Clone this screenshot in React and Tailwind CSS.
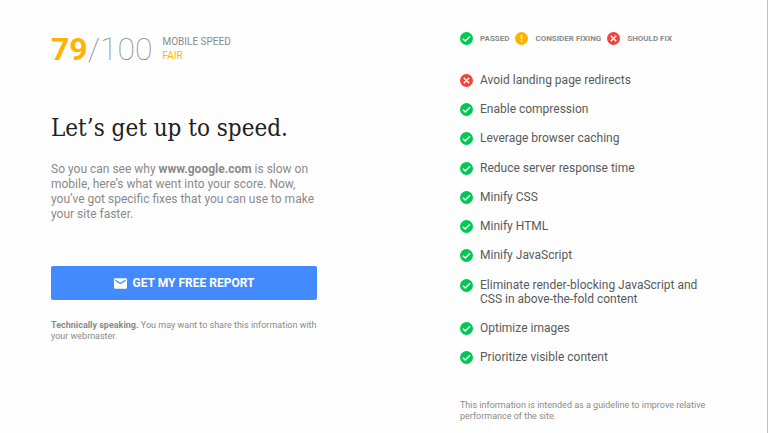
const CHECKS = [
  ["fail", "Avoid landing page redirects"],
  ["pass", "Enable compression"],
  ["pass", "Leverage browser caching"],
  ["pass", "Reduce server response time"],
  ["pass", "Minify CSS"],
  ["pass", "Minify HTML"],
  ["pass", "Minify JavaScript"],
  ["pass", "Eliminate render-blocking JavaScript and CSS in above-the-fold content"],
  ["pass", "Optimize images"],
  ["pass", "Prioritize visible content"],
];

function StatusIcon({ kind }) {
  return (
    <svg viewBox="0 0 20 20" className="size-[13px] shrink-0" aria-hidden="true">
      {kind === "pass" && (
        <>
          <circle cx="10" cy="10" r="10" fill="#00c853" />
          <path d="M4.4 10.4l3.7 3.6 7.4-7.4" fill="none" stroke="#fff" strokeWidth="2.2" />
        </>
      )}
      {kind === "warn" && (
        <>
          <circle cx="10" cy="10" r="10" fill="#ffb300" />
          <path d="M10 4.6v6.6M10 13.2v2.2" fill="none" stroke="#fff" strokeWidth="2.2" />
        </>
      )}
      {kind === "fail" && (
        <>
          <circle cx="10" cy="10" r="10" fill="#f44336" />
          <path d="M5.8 5.8l8.4 8.4M14.2 5.8l-8.4 8.4" fill="none" stroke="#fff" strokeWidth="2.2" />
        </>
      )}
    </svg>
  );
}

function LegendItem({ kind, label }) {
  return (
    <span className="flex items-center gap-[7px]">
      <StatusIcon kind={kind} />
      {label}
    </span>
  );
}

export default function App() {
  return (
    <main className="flex min-h-screen justify-between border-r border-[#bdc1c1] bg-[#fefefe] pr-[61px] pl-[51px] font-['Roboto',sans-serif] text-[#8a8a8a]">
      <section className="w-[266px] pt-[30px]">
        <div className="flex items-start gap-[10px]">
          <p className="text-[32px] leading-[38px] font-thin whitespace-nowrap">
            <span className="font-bold text-[#ffb300]">79</span>/100
          </p>
          <p className="pt-[5px] text-[10px] leading-[14px] whitespace-nowrap">
            MOBILE SPEED
            <span className="block text-[#ffb300]">FAIR</span>
          </p>
        </div>
        <h1 className="mt-11 font-['Roboto_Slab','DejaVu_Serif_Condensed','DejaVu_Serif',serif] text-[24px] leading-8 font-light whitespace-nowrap text-[#212121]">
          Let’s get up to speed.
        </h1>
        <p className="mt-[18px] text-[12px] leading-[15px]">
          So you can see why <strong>www.google.com</strong> is slow on mobile, here’s what went
          into your score. Now, you’ve got specific fixes that you can use to make your site faster.
        </p>
        <button
          type="button"
          className="mt-11 flex h-[34px] w-full items-center justify-center gap-[6px] rounded-xs bg-[#448aff] text-[12px] font-bold text-white"
        >
          <svg viewBox="0 0 20 16" className="h-[11px] w-[13px]" aria-hidden="true">
            <path
              d="M18 0H2a2 2 0 0 0-2 2v12a2 2 0 0 0 2 2h16a2 2 0 0 0 2-2V2a2 2 0 0 0-2-2zm0 4l-8 5-8-5V2l8 5 8-5z"
              fill="#fff"
            />
          </svg>
          GET MY FREE REPORT
        </button>
        <p className="mt-5 text-[9px] leading-[11px]">
          <strong>Technically speaking.</strong> You may want to share this information with your
          webmaster.
        </p>
      </section>

      <section className="flex w-[246px] flex-col items-start pt-8 pb-[11px]">
        <div className="flex gap-[6px] text-[8px] leading-[13px] font-bold whitespace-nowrap">
          <LegendItem kind="pass" label="PASSED" />
          <LegendItem kind="warn" label="CONSIDER FIXING" />
          <LegendItem kind="fail" label="SHOULD FIX" />
        </div>
        <ul className="mt-7 flex flex-1 flex-col justify-between text-[12px] leading-[14px] text-[#5a5a5a]">
          {CHECKS.map(([kind, label]) => (
            <li key={label} className="flex max-w-[244px] items-start gap-[7px]">
              <span className="pt-px">
                <StatusIcon kind={kind} />
              </span>
              {label}
            </li>
          ))}
        </ul>
        <p className="mt-9 text-[9px] leading-[11px]">
          This information is intended as a guideline to improve relative performance of the site.
        </p>
      </section>
    </main>
  );
}
